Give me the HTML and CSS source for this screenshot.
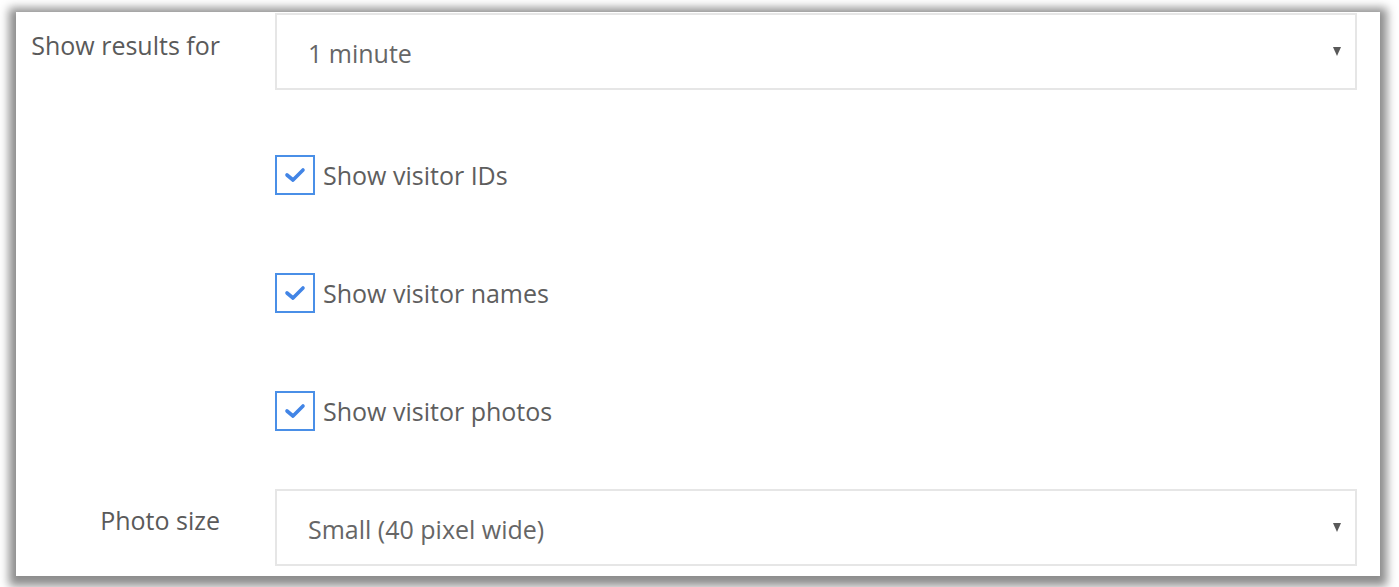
FILE: index.html
```html
<!DOCTYPE html>
<html>
<head>
<meta charset="utf-8">
<link rel="stylesheet" href="styles.css">
</head>
<body>
<div class="panel">
  <div class="row row-select">
    <div class="label">Show results for</div>
    <div class="select">
      <span class="value">1 minute</span>
      <span class="arrow"></span>
    </div>
  </div>
  <div class="check-row first">
    <span class="box"><svg width="22" height="16" viewBox="0 0 22 16"><path d="M3 8 L9 13 L19 3" fill="none" stroke="#4285e6" stroke-width="3.6" stroke-linecap="round" stroke-linejoin="round"/></svg></span>
    <span class="check-label">Show visitor IDs</span>
  </div>
  <div class="check-row">
    <span class="box"><svg width="22" height="16" viewBox="0 0 22 16"><path d="M3 8 L9 13 L19 3" fill="none" stroke="#4285e6" stroke-width="3.6" stroke-linecap="round" stroke-linejoin="round"/></svg></span>
    <span class="check-label">Show visitor names</span>
  </div>
  <div class="check-row">
    <span class="box"><svg width="22" height="16" viewBox="0 0 22 16"><path d="M3 8 L9 13 L19 3" fill="none" stroke="#4285e6" stroke-width="3.6" stroke-linecap="round" stroke-linejoin="round"/></svg></span>
    <span class="check-label">Show visitor photos</span>
  </div>
  <div class="row row-select last">
    <div class="label">Photo size</div>
    <div class="select">
      <span class="value">Small (40 pixel wide)</span>
      <span class="arrow"></span>
    </div>
  </div>
</div>
</body>
</html>
```

FILE: styles.css
```css
html, body {
  margin: 0;
  padding: 0;
  background: #ffffff;
}
body {
  padding: 12px 19px 11px 16px;
  font-family: "Open Sans", "Noto Sans", sans-serif;
  color: #5e5e5e;
}
.panel {
  background: #ffffff;
  height: 564px;
  box-sizing: border-box;
  padding: 1px 23px 0 0;
  box-shadow: 0 3px 9px 7px rgba(0, 0, 0, 0.45);
  display: flex;
  flex-direction: column;
}
.row {
  display: flex;
  align-items: flex-start;
}
.label {
  width: 204px;
  margin-right: 55px;
  text-align: right;
  font-size: 25px;
  line-height: 32px;
  padding-top: 16px;
  color: #5a5a5a;
}
.row.last .label {
  padding-top: 15px;
}
.select {
  flex: 1;
  height: 77px;
  box-sizing: border-box;
  border: 2px solid #e6e6e6;
  display: flex;
  align-items: center;
  justify-content: space-between;
  padding: 0 14px 0 31px;
}
.value {
  font-size: 25px;
  color: #666666;
  padding-top: 2px;
}
.arrow {
  width: 0;
  height: 0;
  border-left: 4.5px solid transparent;
  border-right: 4.5px solid transparent;
  border-top: 9px solid #595959;
  margin-top: -1px;
}
.check-row {
  display: flex;
  align-items: center;
  margin-left: 259px;
  margin-top: 78px;
  height: 40px;
}
.check-row.first {
  margin-top: 65px;
}
.box {
  width: 40px;
  height: 40px;
  box-sizing: border-box;
  border: 2px solid #4a8fe7;
  display: flex;
  align-items: center;
  justify-content: center;
  margin-right: 8px;
}
.check-label {
  font-size: 25px;
  color: #5e5e5e;
}
.row.last {
  margin-top: 58px;
}
```
